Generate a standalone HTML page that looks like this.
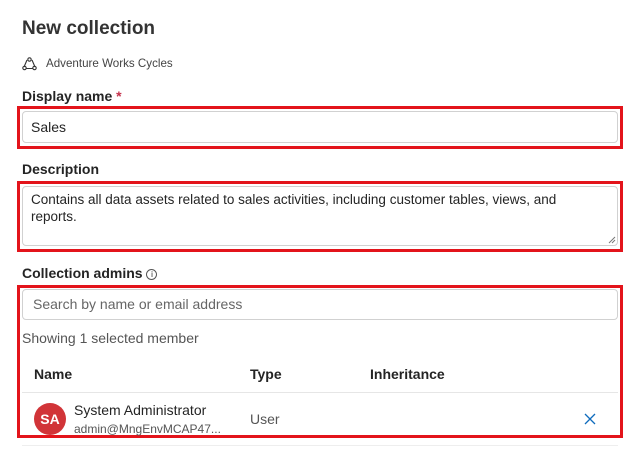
<!DOCTYPE html>
<html><head><style>
body{margin:0;width:640px;height:469px;background:#fff;font-family:"Liberation Sans",sans-serif;color:#242424;position:relative;overflow:hidden}
.a{position:absolute;white-space:nowrap}
.red{position:absolute;border:3px solid #e3141b;box-sizing:border-box}
.inp{position:absolute;border:1px solid #d1d1d1;border-radius:4px;box-sizing:border-box;background:#fff}
.lbl{font-size:14px;font-weight:bold}
</style></head><body>
<div class="a" style="left:22px;top:18px;font-size:19px;font-weight:bold;color:#333">New collection</div>
<svg class="a" style="left:22px;top:57px" width="15" height="14" viewBox="0 0 15 14" fill="none" stroke="#333" stroke-width="1.1"><path d="M5 3 L2 10 M10 3 L13 10 M4 11.5 H11"/><circle cx="7.5" cy="2.5" r="1.7"/><circle cx="2.5" cy="11" r="1.7"/><circle cx="12.5" cy="11" r="1.7"/></svg>
<div class="a" style="left:46px;top:57px;font-size:11.6px;color:#444">Adventure Works Cycles</div>
<div class="a lbl" style="left:22px;top:88px">Display name <span style="color:#c4314b">*</span></div>
<div class="red" style="left:17px;top:106px;width:606px;height:43px"></div>
<div class="inp" style="left:22px;top:111px;width:596px;height:32px"></div>
<div class="a" style="left:31px;top:119px;font-size:14px">Sales</div>
<div class="a lbl" style="left:22px;top:161px">Description</div>
<div class="red" style="left:17px;top:181px;width:606px;height:71px"></div>
<div class="inp" style="left:22px;top:186px;width:596px;height:60px"></div>
<div class="a" style="left:31px;top:191px;font-size:13.5px;line-height:17px;white-space:normal;width:570px">Contains all data assets related to sales activities, including customer tables, views, and reports.</div>
<svg class="a" style="left:608px;top:236px" width="8" height="8"><path d="M7 1 L1 7 M7 4 L4 7" stroke="#777"/></svg>
<div class="a lbl" style="left:22px;top:265px">Collection admins <span style="font-weight:normal;border:1px solid #555;border-radius:50%;display:inline-block;width:9px;height:9px;line-height:9px;text-align:center;font-size:8px;vertical-align:1px">i</span></div>
<div class="red" style="left:17px;top:285px;width:606px;height:153px"></div>
<div class="inp" style="left:22px;top:289px;width:596px;height:31px"></div>
<div class="a" style="left:33px;top:296px;font-size:14px;color:#666">Search by name or email address</div>
<div class="a" style="left:22px;top:330px;font-size:14px;color:#555">Showing 1 selected member</div>
<div class="a lbl" style="left:34px;top:366px">Name</div>
<div class="a lbl" style="left:250px;top:366px">Type</div>
<div class="a lbl" style="left:370px;top:366px">Inheritance</div>
<div class="a" style="left:22px;top:392px;width:596px;height:1px;background:#e6e6e6"></div>
<div class="a" style="left:34px;top:403px;width:32px;height:32px;border-radius:50%;background:#d13438;color:#fff;font-weight:bold;font-size:14px;line-height:32px;text-align:center">SA</div>
<div class="a" style="left:74px;top:402px;font-size:14px">System Administrator</div>
<div class="a" style="left:74px;top:422px;font-size:12px;color:#555">admin@MngEnvMCAP47...</div>
<div class="a" style="left:250px;top:411px;font-size:14px;color:#555">User</div>
<svg class="a" style="left:584px;top:413px" width="12" height="12"><path d="M1 1 L11 11 M11 1 L1 11" stroke="#0f6cbd" stroke-width="1.3"/></svg>
<div class="a" style="left:22px;top:445px;width:596px;height:1px;background:#eee"></div>
</body></html>
